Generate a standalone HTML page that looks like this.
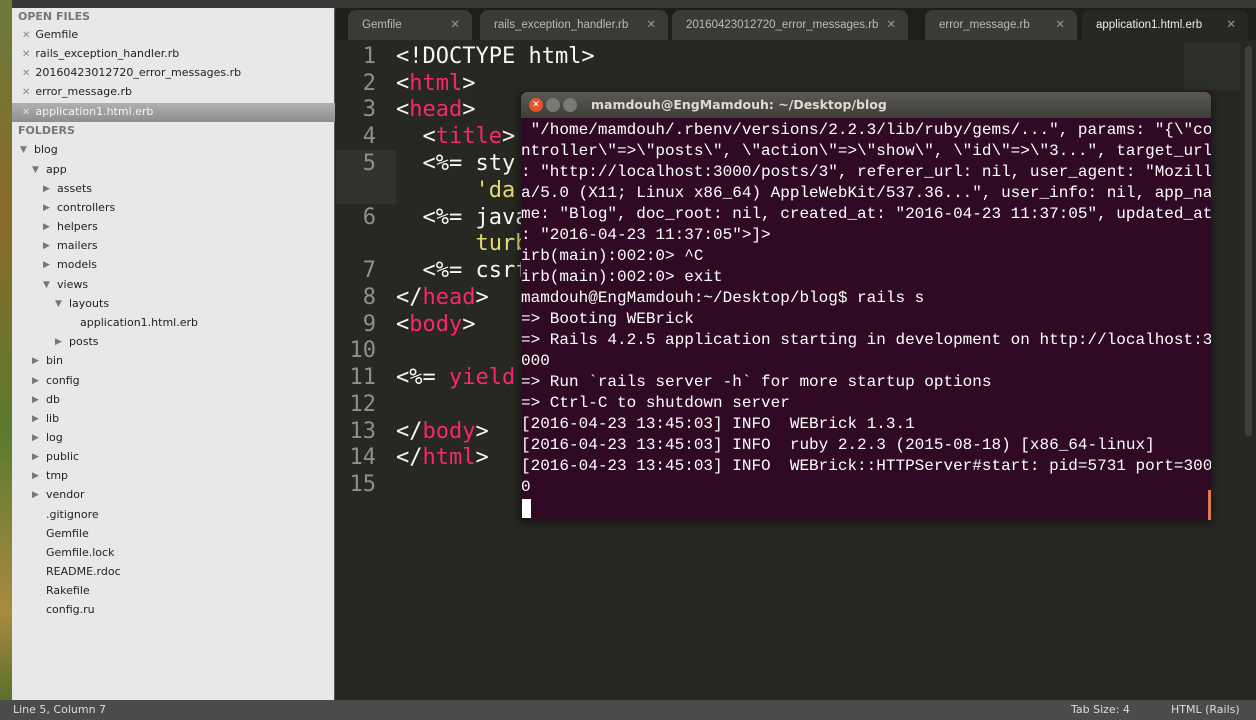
<!DOCTYPE html>
<html><head><style>
*{margin:0;padding:0;box-sizing:border-box}
body{width:1256px;height:720px;overflow:hidden;background:#272822;position:relative;font-family:"DejaVu Sans","Liberation Sans",sans-serif}
.abs{position:absolute}
#top{left:0;top:0;width:1256px;height:10px;background:#3a3935}
#desk{left:0;top:0;width:12px;height:720px;background:linear-gradient(#6b7a3a,#8a6a2a 30%,#5c7a30 60%,#a88a40 85%,#4a6a28)}
#side{left:12px;top:8px;width:323px;height:692px;background:#e8e8e8;border-right:1px solid #555}
.it{position:absolute;font-size:11px;color:#222;white-space:nowrap;line-height:16px}
.hd{font-weight:bold;color:#777;font-size:11px}
.x{color:#888;font-size:10px;margin-right:5px}
.ar{position:absolute;font-size:9px;color:#777}
#sel{left:12px;top:103px;width:323px;height:19px;background:linear-gradient(#b0b0b0,#8e8e8e)}
#tabs{left:336px;top:8px;width:920px;height:34px;background:#1e1e1b}
.tab{position:absolute;top:10px;height:30px;background:#3a3a36;border-radius:8px 8px 0 0;color:#bbb;font-family:"Liberation Sans",sans-serif;font-size:11.5px;line-height:31px;padding-left:14px;white-space:nowrap}
.tab b{font-weight:normal;position:absolute;right:12px;color:#999}
#edit{left:336px;top:40px;width:920px;height:660px;background:#272822}
.ln{position:absolute;left:336px;width:40px;text-align:right;font-family:"DejaVu Sans Mono","Liberation Mono",monospace;font-size:22px;color:#8f908a;line-height:27px}
.cd{position:absolute;left:396px;font-family:"DejaVu Sans Mono","Liberation Mono",monospace;font-size:22px;color:#f8f8f2;line-height:27px;white-space:pre}
.t{color:#f92672}.s{color:#e6db74}
#term{left:521px;top:92px;width:690px;height:428px;background:#300a24;box-shadow:0 2px 10px rgba(0,0,0,.6)}
#tt{left:521px;top:92px;width:690px;height:26px;background:linear-gradient(#5a5954,#3e3d39);border-radius:6px 6px 0 0;color:#dfdbd2;font-weight:bold;font-size:12.5px;line-height:26px}
.tl{position:absolute;left:521px;font-family:"Liberation Mono",monospace;font-size:16px;color:#fff;line-height:21px;white-space:pre;width:690px;overflow:hidden}
#status{left:0;top:700px;width:1256px;height:20px;background:#4b4b4b;color:#ddd;font-size:11px;line-height:20px}
</style></head><body>
<div class="abs" id="top"></div>
<div class="abs" id="desk"></div>
<div class="abs" id="side"></div>
<div class="abs" id="sel"></div>
<div class="it hd" style="left:18px;top:9px">OPEN FILES</div>
<div class="it" style="left:22px;top:27px"><span class="x">✕</span>Gemfile</div>
<div class="it" style="left:22px;top:46px"><span class="x">✕</span>rails_exception_handler.rb</div>
<div class="it" style="left:22px;top:65px"><span class="x">✕</span>20160423012720_error_messages.rb</div>
<div class="it" style="left:22px;top:84px"><span class="x">✕</span>error_message.rb</div>
<div class="it" style="left:22px;top:104px;color:#f4f4f4"><span class="x" style="color:#ddd">✕</span>application1.html.erb</div>
<div class="it hd" style="left:18px;top:123px">FOLDERS</div>
<div class="ar" style="left:20px;top:145px">▼</div><div class="it" style="left:34px;top:142px">blog</div>
<div class="ar" style="left:32px;top:165px">▼</div><div class="it" style="left:46px;top:162px">app</div>
<div class="ar" style="left:43px;top:184px">▶</div><div class="it" style="left:57px;top:181px">assets</div>
<div class="ar" style="left:43px;top:203px">▶</div><div class="it" style="left:57px;top:200px">controllers</div>
<div class="ar" style="left:43px;top:222px">▶</div><div class="it" style="left:57px;top:219px">helpers</div>
<div class="ar" style="left:43px;top:241px">▶</div><div class="it" style="left:57px;top:238px">mailers</div>
<div class="ar" style="left:43px;top:260px">▶</div><div class="it" style="left:57px;top:257px">models</div>
<div class="ar" style="left:43px;top:280px">▼</div><div class="it" style="left:57px;top:277px">views</div>
<div class="ar" style="left:55px;top:299px">▼</div><div class="it" style="left:69px;top:296px">layouts</div>
<div class="it" style="left:80px;top:315px">application1.html.erb</div>
<div class="ar" style="left:55px;top:337px">▶</div><div class="it" style="left:69px;top:334px">posts</div>
<div class="ar" style="left:32px;top:356px">▶</div><div class="it" style="left:46px;top:353px">bin</div>
<div class="ar" style="left:32px;top:376px">▶</div><div class="it" style="left:46px;top:373px">config</div>
<div class="ar" style="left:32px;top:395px">▶</div><div class="it" style="left:46px;top:392px">db</div>
<div class="ar" style="left:32px;top:414px">▶</div><div class="it" style="left:46px;top:411px">lib</div>
<div class="ar" style="left:32px;top:433px">▶</div><div class="it" style="left:46px;top:430px">log</div>
<div class="ar" style="left:32px;top:452px">▶</div><div class="it" style="left:46px;top:449px">public</div>
<div class="ar" style="left:32px;top:471px">▶</div><div class="it" style="left:46px;top:468px">tmp</div>
<div class="ar" style="left:32px;top:490px">▶</div><div class="it" style="left:46px;top:487px">vendor</div>
<div class="it" style="left:46px;top:507px">.gitignore</div>
<div class="it" style="left:46px;top:526px">Gemfile</div>
<div class="it" style="left:46px;top:545px">Gemfile.lock</div>
<div class="it" style="left:46px;top:564px">README.rdoc</div>
<div class="it" style="left:46px;top:583px">Rakefile</div>
<div class="it" style="left:46px;top:602px">config.ru</div>

<div class="abs" id="tabs"></div>
<div class="tab" style="left:348px;width:124px">Gemfile<b>✕</b></div>
<div class="tab" style="left:480px;width:188px">rails_exception_handler.rb<b>✕</b></div>
<div class="tab" style="left:672px;width:236px">20160423012720_error_messages.rb<b>✕</b></div>
<div class="tab" style="left:925px;width:152px">error_message.rb<b>✕</b></div>
<div class="tab" style="left:1082px;width:166px;background:#272822;color:#eee">application1.html.erb<b>✕</b></div>
<div class="abs" id="edit"></div>
<div class="abs" style="left:336px;top:150px;width:60px;height:54px;background:#31322c"></div>
<div class="abs" style="left:1184px;top:42px;width:56px;height:48px;background:#2e2f29"></div>
<div class="abs" style="left:1245px;top:46px;width:7px;height:390px;background:#3e3e3a;border-radius:3px"></div>

<div class="ln" style="top:43px">1</div><div class="cd" style="top:43px">&lt;!DOCTYPE html&gt;</div>
<div class="ln" style="top:70px">2</div><div class="cd" style="top:70px">&lt;<span class="t">html</span>&gt;</div>
<div class="ln" style="top:96px">3</div><div class="cd" style="top:96px">&lt;<span class="t">head</span>&gt;</div>
<div class="ln" style="top:123px">4</div><div class="cd" style="top:123px">  &lt;<span class="t">title</span>&gt;</div>
<div class="ln" style="top:150px">5</div><div class="cd" style="top:150px">  &lt;%= sty</div>
<div class="cd" style="top:177px">      <span class="s">'da</span></div>
<div class="ln" style="top:204px">6</div><div class="cd" style="top:204px">  &lt;%= java</div>
<div class="cd" style="top:230px">      <span class="s">turb</span></div>
<div class="ln" style="top:257px">7</div><div class="cd" style="top:257px">  &lt;%= csrf</div>
<div class="ln" style="top:284px">8</div><div class="cd" style="top:284px">&lt;/<span class="t">head</span>&gt;</div>
<div class="ln" style="top:311px">9</div><div class="cd" style="top:311px">&lt;<span class="t">body</span>&gt;</div>
<div class="ln" style="top:337px">10</div>
<div class="ln" style="top:364px">11</div><div class="cd" style="top:364px">&lt;%= <span class="t">yield</span></div>
<div class="ln" style="top:391px">12</div>
<div class="ln" style="top:418px">13</div><div class="cd" style="top:418px">&lt;/<span class="t">body</span>&gt;</div>
<div class="ln" style="top:444px">14</div><div class="cd" style="top:444px">&lt;/<span class="t">html</span>&gt;</div>
<div class="ln" style="top:471px">15</div>

<div class="abs" id="term"></div>
<div class="abs" id="tt">
<span class="abs" style="left:8px;top:6px;width:14px;height:14px;border-radius:50%;background:#e5542a;color:#fff;font-size:9px;line-height:14px;text-align:center">✕</span>
<span class="abs" style="left:25px;top:6px;width:14px;height:14px;border-radius:50%;background:#7a7974"></span>
<span class="abs" style="left:42px;top:6px;width:14px;height:14px;border-radius:50%;background:#7a7974"></span>
<span class="abs" style="left:70px;top:0">mamdouh@EngMamdouh: ~/Desktop/blog</span></div>
<div class="tl" style="top:120px"> "/home/mamdouh/.rbenv/versions/2.2.3/lib/ruby/gems/...", params: "{\"co</div>
<div class="tl" style="top:141px">ntroller\"=>\"posts\", \"action\"=>\"show\", \"id\"=>\"3...", target_url</div>
<div class="tl" style="top:162px">: "http://localhost:3000/posts/3", referer_url: nil, user_agent: "Mozill</div>
<div class="tl" style="top:183px">a/5.0 (X11; Linux x86_64) AppleWebKit/537.36...", user_info: nil, app_na</div>
<div class="tl" style="top:204px">me: "Blog", doc_root: nil, created_at: "2016-04-23 11:37:05", updated_at</div>
<div class="tl" style="top:225px">: "2016-04-23 11:37:05"&gt;]&gt;</div>
<div class="tl" style="top:246px">irb(main):002:0&gt; ^C</div>
<div class="tl" style="top:267px">irb(main):002:0&gt; exit</div>
<div class="tl" style="top:288px">mamdouh@EngMamdouh:~/Desktop/blog$ rails s</div>
<div class="tl" style="top:309px">=&gt; Booting WEBrick</div>
<div class="tl" style="top:330px">=&gt; Rails 4.2.5 application starting in development on http://localhost:3</div>
<div class="tl" style="top:351px">000</div>
<div class="tl" style="top:372px">=&gt; Run `rails server -h` for more startup options</div>
<div class="tl" style="top:393px">=&gt; Ctrl-C to shutdown server</div>
<div class="tl" style="top:414px">[2016-04-23 13:45:03] INFO  WEBrick 1.3.1</div>
<div class="tl" style="top:435px">[2016-04-23 13:45:03] INFO  ruby 2.2.3 (2015-08-18) [x86_64-linux]</div>
<div class="tl" style="top:456px">[2016-04-23 13:45:03] INFO  WEBrick::HTTPServer#start: pid=5731 port=300</div>
<div class="tl" style="top:477px">0</div>
<div class="abs" style="left:522px;top:499px;width:9px;height:19px;background:#fff"></div>
<div class="abs" style="left:1208px;top:490px;width:3px;height:30px;background:#e07850"></div>

<div class="abs" id="status"><span class="abs" style="left:13px">Line 5, Column 7</span><span class="abs" style="left:1071px">Tab Size: 4</span><span class="abs" style="left:1171px">HTML (Rails)</span></div>
</body></html>
